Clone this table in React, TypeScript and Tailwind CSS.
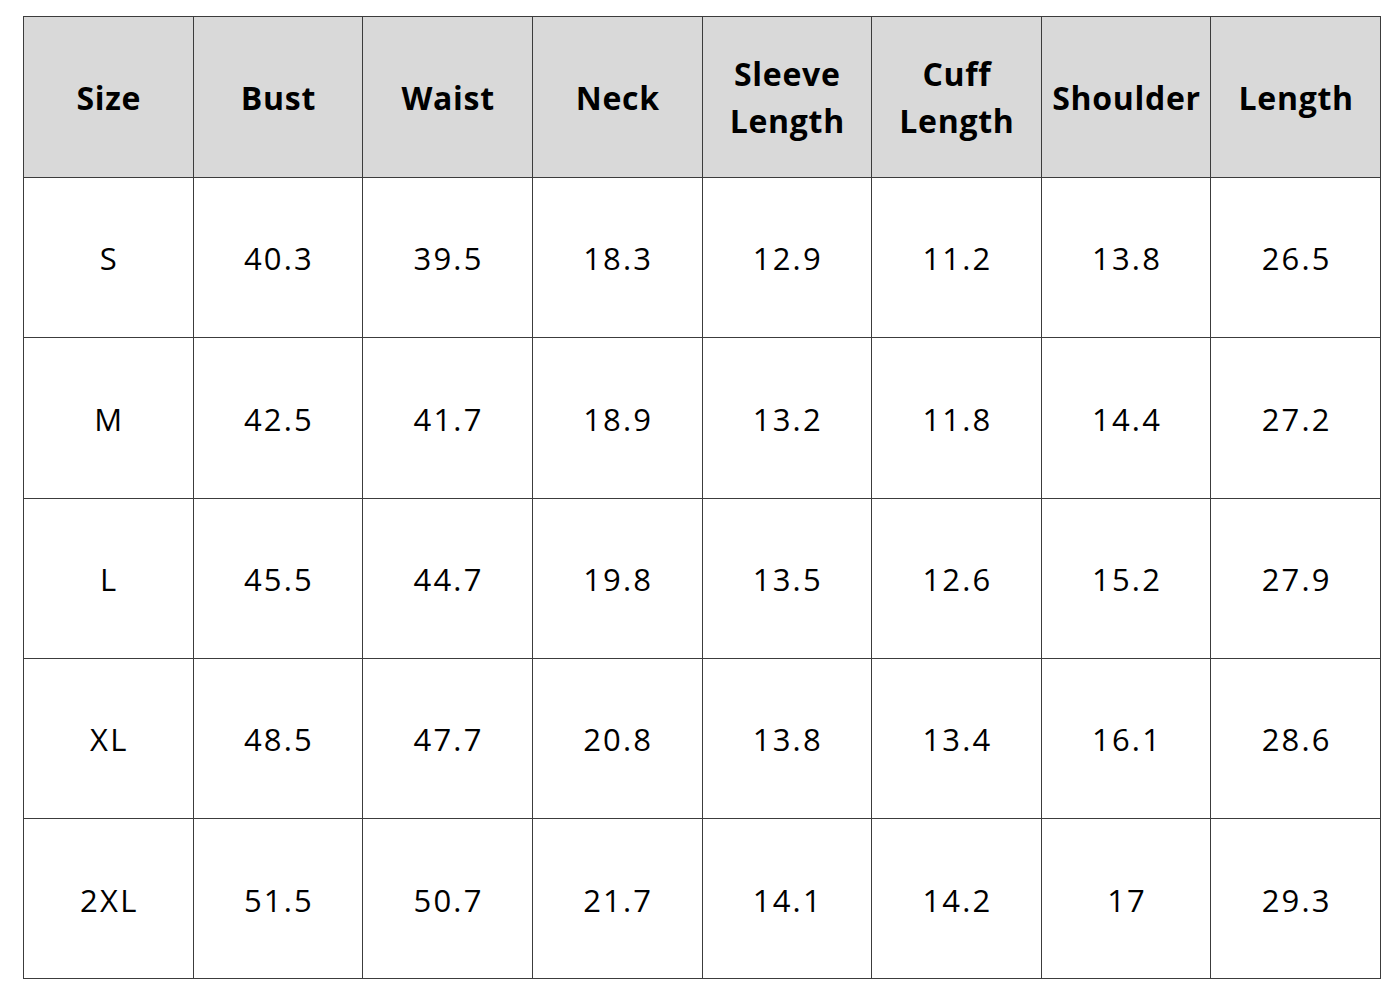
import React from "react";

const headers = ["Size", "Bust", "Waist", "Neck", "Sleeve Length", "Cuff Length", "Shoulder", "Length"];

const rows = [
  ["S", "40.3", "39.5", "18.3", "12.9", "11.2", "13.8", "26.5"],
  ["M", "42.5", "41.7", "18.9", "13.2", "11.8", "14.4", "27.2"],
  ["L", "45.5", "44.7", "19.8", "13.5", "12.6", "15.2", "27.9"],
  ["XL", "48.5", "47.7", "20.8", "13.8", "13.4", "16.1", "28.6"],
  ["2XL", "51.5", "50.7", "21.7", "14.1", "14.2", "17", "29.3"],
];

const App = () => {
  return (
    <div className="min-h-[1000px] w-[1400px] bg-white pt-[16px] pl-[23px] font-['Open_Sans',sans-serif] text-black">
      <div className="grid w-[1358px] grid-cols-8 border-l border-t border-[#3c3c3c]">
        {headers.map((h) => (
          <div
            key={h}
            className="flex h-[161px] items-center justify-center border-b border-r border-[#3c3c3c] bg-[#d9d9d9] pl-[1px] text-center text-[32px] font-bold leading-[47px] tracking-[0.7px]"
          >
            {h === "Sleeve Length" || h === "Cuff Length" ? (
              <span>
                {h.split(" ")[0]}
                <br />
                {h.split(" ")[1]}
              </span>
            ) : (
              h
            )}
          </div>
        ))}
        {rows.map((row) =>
          row.map((cell, i) => (
            <div
              key={row[0] + i}
              className="flex h-[160.3px] items-center justify-center border-b border-r border-[#3c3c3c] pt-[2px] pl-[2px] text-[31px] tracking-[2.2px]"
            >
              {cell}
            </div>
          ))
        )}
      </div>
    </div>
  );
};

export default App;
